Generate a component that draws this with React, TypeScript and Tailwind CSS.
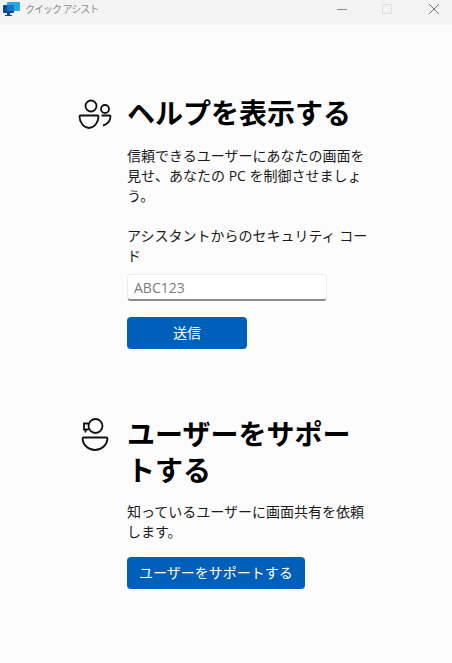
const cjk = { fontFamily: '"Open Sans", "Noto Sans CJK JP", sans-serif' };

const AppIcon = () => (
  <svg width="17" height="14" viewBox="0 0 17 14" className="shrink-0">
    <rect x="0" y="3" width="11" height="8" rx="1" fill="#0b4a94" />
    <rect x="4" y="11" width="3" height="2" fill="#0b4a94" />
    <rect x="2" y="13" width="7" height="1" fill="#0b4a94" />
    <rect x="4" y="0" width="13" height="9" rx="1" fill="#2aa5e8" />
    <rect x="4" y="3" width="7" height="6" fill="#1676c8" />
  </svg>
);

const HelpIcon = () => (
  <svg width="34" height="32" viewBox="0 0 34 32" fill="none" stroke="#111" strokeWidth="1.800" className="shrink-0">
    <circle cx="13" cy="7" r="5.500" />
    <circle cx="27" cy="10" r="4" />
    <path d="M2.500 16.500h17c.6 0 1 .5 1 1 0 6-4.500 11.500-9.500 11.500S1.500 23.500 1.500 17.500c0-.5.4-1 1-1Z" />
    <path d="M23.500 16.500H31.500c.6 0 1 .5 1 1 0 4-3 8-7.500 9" />
  </svg>
);

const SupportIcon = () => (
  <svg width="32" height="34" viewBox="0 0 32 34" fill="none" stroke="#111" strokeWidth="1.800" className="shrink-0">
    <circle cx="17.500" cy="8" r="7" />
    <path d="M10.500 5.500H6v6h4.500M7.500 11.500v3" />
    <path d="M6 19.500h22c1 0 1.500.6 1.500 1.400C29 27 23.500 32 17 32S5 27 4.500 20.900c0-.8.5-1.400 1.500-1.400Z" />
  </svg>
);

const Section = ({ icon, iconClass, title, children }: { icon: React.ReactNode; iconClass: string; title: string; children: React.ReactNode }) => (
  <section className="flex">
    <div className={`w-[49px] shrink-0 ${iconClass}`}>{icon}</div>
    <div className="w-[245px]">
      <h2 className="text-[28px] leading-[36px] font-bold text-black">{title}</h2>
      {children}
    </div>
  </section>
);

export default function App() {
  return (
    <div className="flex h-[663px] w-[452px] flex-col overflow-hidden bg-[#fcfcfc] text-[14px] leading-[20px] text-[#1a1a1a]" style={cjk}>
      <header className="flex h-[25px] shrink-0 items-center bg-[#f3f3f3] pb-[7px] pl-[3px]">
        <AppIcon />
        <span className="ml-[5px] text-[10px] leading-[12px] tracking-[-1px] text-[#8c8c8c]">クイック アシスト</span>
        <div className="ml-auto flex items-center">
          <span className="mr-[35px] h-px w-[10px] bg-[#8a8a8a]" />
          <span className="mr-[36px] h-[10px] w-[10px] rounded-[1px] border border-[#dcdcdc]" />
          <svg width="12" height="12" viewBox="0 0 12 12" stroke="#777" className="mr-3">
            <path d="M1 1l10 10M11 1 1 11" />
          </svg>
        </div>
      </header>
      <main className="flex flex-col pl-[78px] pt-[70px]">
        <Section icon={<HelpIcon />} iconClass="pt-[4px]" title="ヘルプを表示する">
          <p className="mt-[15px]">信頼できるユーザーにあなたの画面を見せ、あなたの PC を制御させましょう。</p>
          <p className="mt-[20px]">アシスタントからのセキュリティ コード</p>
          <input
            placeholder="ABC123"
            className="mt-[8px] box-border h-[27px] w-[200px] rounded-[4px] border border-[#ececec] border-b-2 border-b-[#8c8c8c] bg-white px-[6px] text-[14px] outline-none placeholder:text-[#7b7b7b]"
          />
          <button className="mt-[16px] block h-[32px] w-[120px] rounded-[4px] bg-[#0060b9] text-[14px] text-white">送信</button>
        </Section>
        <div className="h-[67px]" />
        <Section icon={<SupportIcon />} iconClass="pt-[2px]" title="ユーザーをサポートする">
          <p className="mt-[14px]">知っているユーザーに画面共有を依頼します。</p>
          <button className="mt-[15px] block h-[32px] rounded-[4px] bg-[#0060b9] px-3 text-[14px] text-white">ユーザーをサポートする</button>
        </Section>
      </main>
    </div>
  );
}
